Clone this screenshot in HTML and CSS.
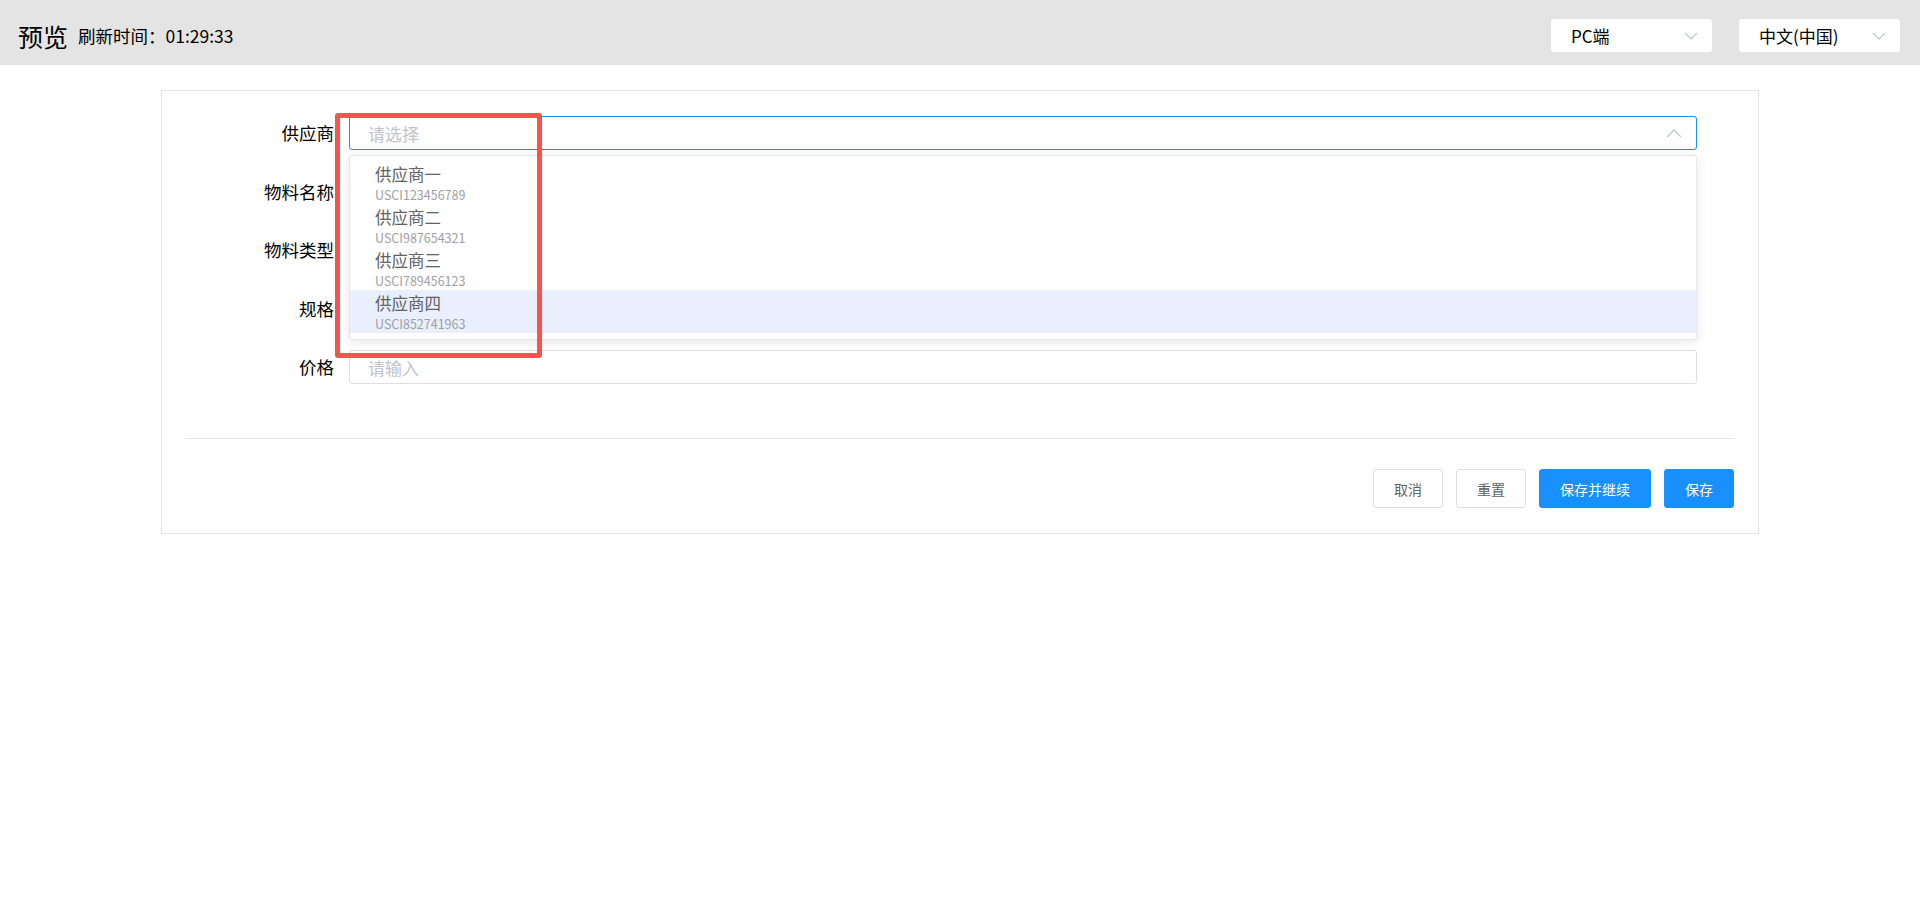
FILE: index.html
```html
<!DOCTYPE html>
<html lang="zh-CN">

<head>
    <meta charset="utf-8">
    <meta name="viewport" content="width=device-width, initial-scale=1.0">
    <title>预览</title>
    <link rel="stylesheet" href="styles.css">
</head>

<body>
    <header class="topbar">
        <div class="topbar_left">
            <h1>预览</h1>
            <span class="refresh">刷新时间：01:29:33</span>
        </div>
        <div class="topbar_right">
            <div class="mini_select">
                <span>PC端</span>
                <svg class="arrow" width="14" height="8" viewBox="0 0 14 8"><path d="M1 1l6 6 6-6" fill="none" stroke="#c0c4cc" stroke-width="1.2"/></svg>
            </div>
            <div class="mini_select">
                <span>中文(中国)</span>
                <svg class="arrow" width="14" height="8" viewBox="0 0 14 8"><path d="M1 1l6 6 6-6" fill="none" stroke="#c0c4cc" stroke-width="1.2"/></svg>
            </div>
        </div>
    </header>

    <main class="card">
        <form class="form">
            <div class="form_item">
                <label>供应商</label>
                <div class="control">
                    <div class="input select is_open">
                        <span class="placeholder">请选择</span>
                        <svg class="arrow" width="16" height="9" viewBox="0 0 16 9"><path d="M1 8l7-7 7 7" fill="none" stroke="#c0c4cc" stroke-width="1.3"/></svg>
                    </div>

                    <ul class="dropdown">
                        <li><p class="opt_name">供应商一</p><p class="opt_code">USCI123456789</p></li>
                        <li><p class="opt_name">供应商二</p><p class="opt_code">USCI987654321</p></li>
                        <li><p class="opt_name">供应商三</p><p class="opt_code">USCI789456123</p></li>
                        <li class="hover"><p class="opt_name">供应商四</p><p class="opt_code">USCI852741963</p></li>
                    </ul>

                    <div class="mark"></div>
                </div>
            </div>
            <!-- these three sit under the open list -->
            <div class="form_item">
                <label>物料名称</label>
                <div class="control"><div class="input"></div></div>
            </div>
            <div class="form_item">
                <label>物料类型</label>
                <div class="control"><div class="input"></div></div>
            </div>
            <div class="form_item">
                <label>规格</label>
                <div class="control"><div class="input"></div></div>
            </div>
            <div class="form_item">
                <label>价格</label>
                <div class="control"><div class="input"><span class="placeholder">请输入</span></div></div>
            </div>
        </form>

        <div class="divider"></div>

        <div class="actions">
            <button type="button" class="btn">取消</button>
            <button type="button" class="btn">重置</button>
            <button type="button" class="btn btn_primary">保存并继续</button>
            <button type="button" class="btn btn_primary">保存</button>
        </div>
    </main>
</body></html>
```

FILE: styles.css
```css
* {
    margin: 0;
    padding: 0;
    box-sizing: border-box;
}

body {
    font-family: "Noto Sans CJK SC", "Noto Sans", sans-serif;
    color: #000;
    background: #fff;
    height: 920px;
}

ul {
    list-style: none;
}

/* top bar */

.topbar {
    height: 65px;
    background: #e4e4e4;
    display: flex;
    align-items: center;
    justify-content: space-between;
    padding: 6px 20px 0 18px;
}

.topbar_left {
    display: flex;
    align-items: center;
    gap: 10px;
}

.topbar_left h1 {
    font-size: 25px;
    font-weight: normal;
    line-height: 36px;
}

.refresh {
    font-size: 17.5px;
    line-height: 26px;
}

.topbar_right {
    display: flex;
    gap: 27px;
}

.mini_select {
    width: 161px;
    height: 33px;
    background: #fff;
    border-radius: 3px;
    display: flex;
    align-items: center;
    justify-content: space-between;
    padding: 0 14px 0 20px;
    font-size: 17px;
}

/* card */

.card {
    width: 1598px;
    margin: 25px auto 0;
    border: 1px solid #e4e4e4;
    padding: 25px 24px 25px 24px;
}

.form {
    padding-right: 37px;
}

.form_item {
    display: flex;
    align-items: center;
    margin-bottom: 24.5px;
}

.form_item:last-child {
    margin-bottom: 0;
}

.form_item label {
    width: 163px;
    padding-right: 15px;
    text-align: right;
    font-size: 17.5px;
    line-height: 26px;
}

.control {
    flex: 1;
    position: relative;
}

.input {
    height: 34px;
    border: 1px solid #dcdfe6;
    border-radius: 3px;
    display: flex;
    align-items: center;
    justify-content: space-between;
    padding: 0 14px 0 18px;
    background: #fff;
}

.placeholder {
    color: #c0c4cc;
    font-size: 17px;
    line-height: 25px;
}

.select.is_open {
    border-color: #1890ff;
}

/* open list */

.dropdown {
    position: absolute;
    top: 39px;
    left: 0;
    right: 0;
    z-index: 5;
    background: #fff;
    border: 1px solid #e4e7ed;
    border-radius: 3px;
    box-shadow: 0 2px 12px rgba(0, 0, 0, 0.1);
    padding: 5px 0 6px;
}

.dropdown li {
    height: 43px;
    padding: 1px 0 0 25px;
}

.dropdown li.hover {
    background: #e9effd;
}

.opt_name {
    font-size: 16.5px;
    line-height: 24px;
    color: #606266;
}

.opt_code {
    font-size: 12.5px;
    line-height: 18px;
    color: #a0a0a4;
}

.mark {
    position: absolute;
    left: -14px;
    top: -3px;
    width: 207px;
    height: 245px;
    border: 5px solid #fa5151;
    border-radius: 3px;
    z-index: 6;
}

/* footer */

.divider {
    height: 1px;
    background: #e4e4e4;
    margin-top: 54px;
}

.actions {
    display: flex;
    justify-content: flex-end;
    gap: 13px;
    margin-top: 30px;
}

.btn {
    height: 39px;
    padding: 0 20px;
    border: 1px solid #dcdfe6;
    border-radius: 3px;
    background: #fff;
    color: #606266;
    font-family: inherit;
    font-size: 14px;
}

.btn_primary {
    background: #1890ff;
    border-color: #1890ff;
    color: #fff;
}
```
